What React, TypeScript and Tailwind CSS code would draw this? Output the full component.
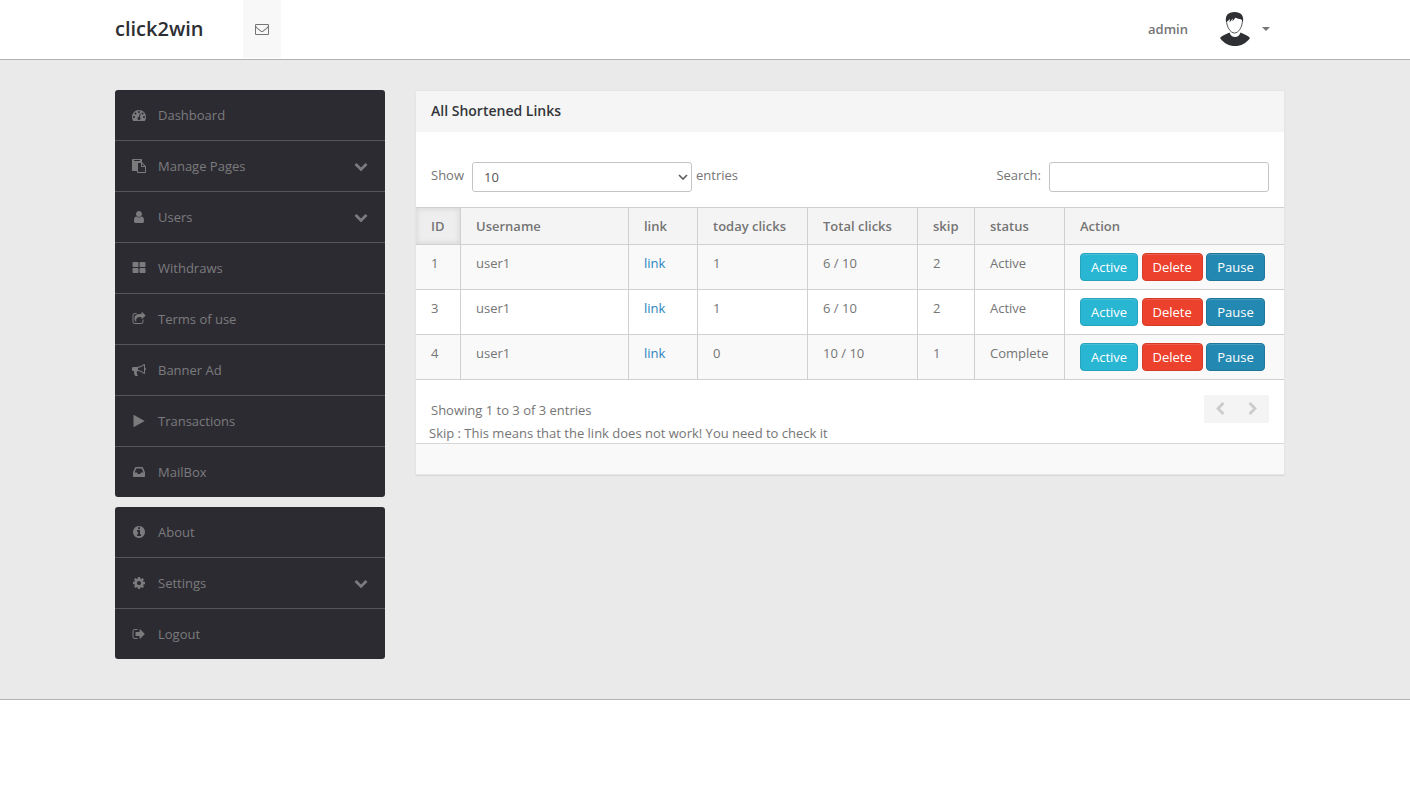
import { useState } from "react";

// 1792-unit icon outlines
const icons = {
  envelope:
    "M1664 1504v-768q-32 36-69 66-268 206-426 338-51 43-83 67t-86.5 48.5-102.5 24.5h-2q-48 0-102.5-24.5t-86.5-48.5-83-67q-158-132-426-338-37-30-69-66v768q0 13 9.5 22.5t22.5 9.5h1472q13 0 22.5-9.5t9.5-22.5zm0-1051v-24.5l-.5-13-3-12.5-5.5-9-9-7.5-14-2.5h-1472q-13 0-22.5 9.5t-9.5 22.5q0 168 147 284 193 152 401 317 6 5 35 29.5t46 37.5 44.5 31.5 50.5 27.5 43 9h2q20 0 43-9t50.5-27.5 44.5-31.5 46-37.5 35-29.5q208-165 401-317 54-43 100.5-115.5t46.5-131.5zm128-37v1088q0 66-47 113t-113 47h-1472q-66 0-113-47t-47-113v-1088q0-66 47-113t113-47h1472q66 0 113 47t47 113z",
  dashboard:
    "M384 1152q0-53-37.5-90.5t-90.5-37.5-90.5 37.5-37.5 90.5 37.5 90.5 90.5 37.5 90.5-37.5 37.5-90.5zm192-448q0-53-37.5-90.5t-90.5-37.5-90.5 37.5-37.5 90.5 37.5 90.5 90.5 37.5 90.5-37.5 37.5-90.5zm428 481l101-382q6-26-7.5-48.5t-38.5-29.5-48 6.5-30 39.5l-101 382q-60 5-107 43.5t-63 98.5q-20 77 20 146t117 89 146-20 89-117q16-60-6-117t-72-91zm660-33q0-53-37.5-90.5t-90.5-37.5-90.5 37.5-37.5 90.5 37.5 90.5 90.5 37.5 90.5-37.5 37.5-90.5zm-640-640q0-53-37.5-90.5t-90.5-37.5-90.5 37.5-37.5 90.5 37.5 90.5 90.5 37.5 90.5-37.5 37.5-90.5zm448 192q0-53-37.5-90.5t-90.5-37.5-90.5 37.5-37.5 90.5 37.5 90.5 90.5 37.5 90.5-37.5 37.5-90.5zm320 448q0 261-141 483-19 29-54 29h-1402q-35 0-54-29-141-221-141-483 0-182 71-348t191-286 286-191 348-71 348 71 286 191 191 286 71 348z",
  paste:
    "M768 1664h896v-640h-416q-40 0-68-28t-28-68v-416h-384v1152zm256-1440v-64q0-13-9.5-22.5t-22.5-9.5h-704q-13 0-22.5 9.5t-9.5 22.5v64q0 13 9.5 22.5t22.5 9.5h704q13 0 22.5-9.5t9.5-22.5zm256 672h299l-299-299v299zm512 128v672q0 40-28 68t-68 28h-960q-40 0-68-28t-28-68v-160h-544q-40 0-68-28t-28-68v-1344q0-40 28-68t68-28h1088q40 0 68 28t28 68v328q21 13 36 28l408 408q28 28 48 76t20 88z",
  user: "M1536 1399q0 109-62.5 187t-150.5 78h-854q-88 0-150.5-78t-62.5-187q0-85 8.5-160.5t31.5-152 58.5-131 94-89 134.5-34.5q131 128 313 128t313-128q76 0 134.5 34.5t94 89 58.5 131 31.5 152 8.5 160.5zm-256-887q0 159-112.5 271.5t-271.5 112.5-271.5-112.5-112.5-271.5 112.5-271.5 271.5-112.5 271.5 112.5 112.5 271.5z",
  thLarge:
    "M832 1024v384q0 52-38 90t-90 38h-512q-52 0-90-38t-38-90v-384q0-52 38-90t90-38h512q52 0 90 38t38 90zm0-768v384q0 52-38 90t-90 38h-512q-52 0-90-38t-38-90v-384q0-52 38-90t90-38h512q52 0 90 38t38 90zm896 768v384q0 52-38 90t-90 38h-512q-52 0-90-38t-38-90v-384q0-52 38-90t90-38h512q52 0 90 38t38 90zm0-768v384q0 52-38 90t-90 38h-512q-52 0-90-38t-38-90v-384q0-52 38-90t90-38h512q52 0 90 38t38 90z",
  share:
    "M1472 989v259q0 119-84.5 203.5t-203.5 84.5h-832q-119 0-203.5-84.5t-84.5-203.5v-832q0-119 84.5-203.5t203.5-84.5h255q13 0 22.5 9.5t9.5 22.5q0 27-26 32-77 26-133 60-10 4-16 4h-112q-66 0-113 47t-47 113v832q0 66 47 113t113 47h832q66 0 113-47t47-113v-214q0-19 18-29 28-13 54-37 16-16 35-8 21 9 21 29zm237-496l-384 384q-18 19-45 19-12 0-25-5-39-17-39-59v-192h-160q-323 0-438 131-119 137-74 473 3 23-20 34-8 2-12 2-16 0-26-13-10-14-21-31t-39.5-68.5-49.5-99.5-38.5-114-17.5-122q0-49 3.5-91t14-90 28-88 47-81.5 68.5-74 94.5-61.5 124.5-48.5 159.5-30.5 196.5-11h160v-192q0-42 39-59 13-5 25-5 26 0 45 19l384 384q19 19 19 45t-19 45z",
  bullhorn:
    "M1664 640q53 0 90.5 37.5t37.5 90.5-37.5 90.5-90.5 37.5v384q0 52-38 90t-90 38q-417-347-812-380-58 19-91 66t-31 100.5 40 92.5q-20 33-23 65.5t6 58 33.5 55 48 50 61.5 50.5q-29 58-111.5 83t-168.5 11.5-132-55.5q-7-23-29.5-87.5t-32-94.5-23-89-15-101 3.5-98.5 22-110.5h-122q-66 0-113-47t-47-113v-192q0-66 47-113t113-47h480q435 0 896-384 52 0 90 38t38 90v384zm-128 604v-954q-394 302-768 343v270q377 42 768 341z",
  play: "M1576 927l-1328 738q-23 13-39.5 3t-16.5-36v-1472q0-26 16.5-36t39.5 3l1328 738q23 13 23 31t-23 31z",
  inbox:
    "M1151 960h316q-1-3-2.5-8.5t-2.5-7.5l-212-496h-708l-212 496q-1 3-2.5 8.5t-2.5 7.5h316l95 192h320zm513 30v482q0 26-19 45t-45 19h-1408q-26 0-45-19t-19-45v-482q0-62 25-123l238-552q10-25 36.5-42t52.5-17h832q26 0 52.5 17t36.5 42l238 552q25 61 25 123z",
  info: "M1152 1376v-160q0-14-9-23t-23-9h-96v-512q0-14-9-23t-23-9h-320q-14 0-23 9t-9 23v160q0 14 9 23t23 9h96v320h-96q-14 0-23 9t-9 23v160q0 14 9 23t23 9h448q14 0 23-9t9-23zm-128-896v-160q0-14-9-23t-23-9h-192q-14 0-23 9t-9 23v160q0 14 9 23t23 9h192q14 0 23-9t9-23zm640 416q0 209-103 385.5t-279.5 279.5-385.5 103-385.5-103-279.5-279.5-103-385.5 103-385.5 279.5-279.5 385.5-103 385.5 103 279.5 279.5 103 385.5z",
  cog: "M1152 896q0-106-75-181t-181-75-181 75-75 181 75 181 181 75 181-75 75-181zm512-109v222q0 12-8 23t-20 13l-185 28q-19 54-39 91 35 50 107 138 10 12 10 25t-9 23q-27 37-99 108t-94 71q-12 0-26-9l-138-108q-44 23-91 38-16 136-29 186-7 28-36 28h-222q-14 0-24.5-8.5t-11.5-21.5l-28-184q-49-16-90-37l-141 107q-10 9-25 9-14 0-25-11-126-114-165-168-7-10-7-23 0-12 8-23 15-21 51-66.5t54-70.5q-27-50-41-99l-183-27q-13-2-21-12.5t-8-23.5v-222q0-12 8-23t19-13l186-28q14-46 39-92-40-57-107-138-10-12-10-24 0-10 9-23 26-36 98.5-107.5t94.5-71.5q13 0 26 10l138 107q44-23 91-38 16-136 29-186 7-28 36-28h222q14 0 24.5 8.5t11.5 21.5l28 184q49 16 90 37l142-107q9-9 24-9 13 0 25 10 129 119 165 170 7 8 7 22 0 12-8 23-15 21-51 66.5t-54 70.5q26 50 41 98l183 28q13 2 21 12.5t8 23.5z",
  signOut:
    "M704 1440q0 4 1 20t.5 26.5-3 23.5-10 19.5-20.5 6.5h-320q-119 0-203.5-84.5t-84.5-203.5v-704q0-119 84.5-203.5t203.5-84.5h320q13 0 22.5 9.5t9.5 22.5q0 4 1 20t.5 26.5-3 23.5-10 19.5-20.5 6.5h-320q-66 0-113 47t-47 113v704q0 66 47 113t113 47h312l11.5 1 11.5 3 8 5.5 7 9 2 13.5zm928-544q0 26-19 45l-544 544q-19 19-45 19t-45-19-19-45v-288h-448q-26 0-45-19t-19-45v-384q0-26 19-45t45-19h448v-288q0-26 19-45t45-19 45 19l544 544q19 19 19 45z",
  chevronDown:
    "M1683 808l-742 741q-19 19-45 19t-45-19l-742-741q-19-19-19-45.5t19-45.5l166-165q19-19 45-19t45 19l531 531 531-531q19-19 45-19t45 19l166 165q19 19 19 45.5t-19 45.5z",
  chevronLeft:
    "M1427 301l-531 531 531 531q19 19 19 45t-19 45l-166 166q-19 19-45 19t-45-19l-742-742q-19-19-19-45t19-45l742-742q19-19 45-19t45 19l166 166q19 19 19 45t-19 45z",
  chevronRight:
    "M1363 877l-742 742q-19 19-45 19t-45-19l-166-166q-19-19-19-45t19-45l531-531-531-531q-19-19-19-45t19-45l166-166q19-19 45-19t45 19l742 742q19 19 19 45t-19 45z",
};

type IconName = keyof typeof icons;

function Icon({ name, className = "size-[14px]" }: { name: IconName; className?: string }) {
  return (
    <svg viewBox="0 0 1792 1792" fill="currentColor" aria-hidden="true" className={className}>
      <path d={icons[name]} />
    </svg>
  );
}

type MenuItem = { label: string; icon: IconName; submenu?: boolean };

const mainMenu: MenuItem[] = [
  { label: "Dashboard", icon: "dashboard" },
  { label: "Manage Pages", icon: "paste", submenu: true },
  { label: "Users", icon: "user", submenu: true },
  { label: "Withdraws", icon: "thLarge" },
  { label: "Terms of use", icon: "share" },
  { label: "Banner Ad", icon: "bullhorn" },
  { label: "Transactions", icon: "play" },
  { label: "MailBox", icon: "inbox" },
];

const accountMenu: MenuItem[] = [
  { label: "About", icon: "info" },
  { label: "Settings", icon: "cog", submenu: true },
  { label: "Logout", icon: "signOut" },
];

const rows = [
  { id: 1, username: "user1", today: 1, total: "6 / 10", skip: 2, status: "Active" },
  { id: 3, username: "user1", today: 1, total: "6 / 10", skip: 2, status: "Active" },
  { id: 4, username: "user1", today: 0, total: "10 / 10", skip: 1, status: "Complete" },
];

function Menu({ items }: { items: MenuItem[] }) {
  return (
    <ul className="overflow-hidden rounded-[3px] bg-[#2d2b32] divide-y divide-[#57555b]">
      {items.map((item) => (
        <li key={item.label}>
          <a href="#" className="flex h-[50px] items-center px-[17px] text-[#7b7b7d] hover:text-white">
            <Icon name={item.icon} />
            <span className="ml-3 flex-1">{item.label}</span>
            {item.submenu && <Icon name="chevronDown" />}
          </a>
        </li>
      ))}
    </ul>
  );
}

function Avatar() {
  return (
    <svg viewBox="0 0 30 34" aria-hidden="true" className="h-[34px] w-[30px]">
      <path
        d="M0 26C2 23.500 6 22.500 9.500 20.500C10.500 23.500 12.500 25 15 25C17.500 25 19.500 23.500 20.500 20.500C24 22.500 28 23.500 30 26C26 31.500 21 34 15 34C9 34 4 31.500 0 26Z"
        fill="#2f3033"
      />
      <path
        d="M6.500 8C6.500 15 10.500 21 14.500 21C18.500 21 22.500 15 22.500 8C21 4 8 4 6.500 8Z"
        fill="#fff"
        stroke="#2f3033"
        strokeWidth="0.8"
      />
      <path
        d="M6 10C5 3.500 8 0 14.500 0C21 0 24 3.500 23 10L21.500 7.500C19.500 7 17 6.500 15.500 5.500L12.500 9.500L12.800 6.500L9.500 10.500L10 7L7.200 9.500Z"
        fill="#2f3033"
      />
    </svg>
  );
}

const th = "border-r border-b border-[#d0d0d0] px-[15px] py-2 text-left font-semibold last:border-r-0";
const td = "border-r border-b border-[#d0d0d0] px-[15px] py-2 align-top last:border-r-0";
const btn =
  "rounded-[4px] border px-[10px] py-[3px] leading-5 text-white align-top shadow-[inset_0_1px_0_rgba(255,255,255,0.15)]";

export default function App() {
  const [search, setSearch] = useState("");
  const [pageSize, setPageSize] = useState("10");
  const visible = rows.filter((row) =>
    Object.values(row).join(" ").toLowerCase().includes(search.toLowerCase())
  );

  return (
    <div className="bg-white font-['Open_Sans',sans-serif] text-[13px] leading-5 text-[#757575]">
      <header className="border-b border-[#b4b4b4] bg-white">
        <div className="mx-auto flex h-[59px] max-w-[1180px] items-center pr-[25px] pb-px">
          <a href="#" className="text-[20px] font-semibold text-[#2c2e33]">
            click2win
          </a>
          <button
            type="button"
            aria-label="Messages"
            className="ml-[39px] flex w-[38px] items-center justify-center self-stretch bg-[#f8f8f8]"
          >
            <Icon name="envelope" />
          </button>
          <button type="button" className="ml-auto flex items-center font-semibold">
            <span className="mr-8">admin</span>
            <Avatar />
            <svg viewBox="0 0 8 4" fill="currentColor" aria-hidden="true" className="ml-3 h-1 w-2">
              <path d="M0 0h8L4 4z" />
            </svg>
          </button>
        </div>
      </header>

      <div className="border-b border-[#b4b4b4] bg-[#eaeaea] pt-[30px] pb-10 shadow-[0_1px_2px_rgba(0,0,0,0.12)]">
        <div className="mx-auto flex max-w-[1180px] items-start gap-[30px] pr-[10px]">
          <nav className="flex w-[270px] shrink-0 flex-col gap-[10px]">
            <Menu items={mainMenu} />
            <Menu items={accountMenu} />
          </nav>

          <main className="min-w-0 flex-1 rounded-[2px] border border-[#e6e6e6] bg-white shadow-[0_1px_1px_rgba(0,0,0,0.08)]">
            <h1 className="bg-[#f5f5f5] px-[15px] pt-[10px] pb-[11px] text-[14px] font-semibold text-[#33353a]">
              All Shortened Links
            </h1>

            <div className="flex justify-between px-[15px] pt-[30px] pb-[15px]">
              <div className="flex">
                <label htmlFor="page-size" className="mr-2 pt-[3px]">
                  Show
                </label>
                <div className="relative mr-1">
                  <select
                    id="page-size"
                    value={pageSize}
                    onChange={(e) => setPageSize(e.target.value)}
                    className="h-[30px] w-[220px] appearance-none rounded-[3px] border border-[#c4c4c4] bg-white px-[11px] text-[#555]"
                  >
                    <option>10</option>
                    <option>25</option>
                    <option>50</option>
                    <option>100</option>
                  </select>
                  <svg
                    viewBox="0 0 10 6"
                    fill="none"
                    stroke="#5a5a5a"
                    strokeWidth="1.6"
                    aria-hidden="true"
                    className="pointer-events-none absolute top-3 right-1 h-[6px] w-[10px]"
                  >
                    <path d="M1 1l4 4 4-4" />
                  </svg>
                </div>
                <span className="pt-[3px]">entries</span>
              </div>
              <div className="flex">
                <label htmlFor="search" className="mr-2 pt-[3px]">
                  Search:
                </label>
                <input
                  id="search"
                  type="text"
                  value={search}
                  onChange={(e) => setSearch(e.target.value)}
                  className="h-[30px] w-[220px] rounded-[3px] border border-[#c4c4c4] bg-white px-[11px] text-[#555]"
                />
              </div>
            </div>

            <table className="w-full table-fixed border-separate border-spacing-0 border-t border-[#d0d0d0]">
              <colgroup>
                <col className="w-[45px]" />
                <col />
                <col className="w-[69px]" />
                <col className="w-[110px]" />
                <col className="w-[110px]" />
                <col className="w-[57px]" />
                <col className="w-[90px]" />
                <col className="w-[219px]" />
              </colgroup>
              <thead className="bg-[#f4f4f4]">
                <tr>
                  <th className={th + " bg-[#eeeeee] shadow-[inset_0_0_6px_rgba(0,0,0,0.12)]"}>ID</th>
                  <th className={th}>Username</th>
                  <th className={th}>link</th>
                  <th className={th}>today clicks</th>
                  <th className={th}>Total clicks</th>
                  <th className={th}>skip</th>
                  <th className={th}>status</th>
                  <th className={th}>Action</th>
                </tr>
              </thead>
              <tbody>
                {visible.map((row) => (
                  <tr key={row.id} className="odd:bg-[#f9f9f9]">
                    <td className={td}>{row.id}</td>
                    <td className={td}>{row.username}</td>
                    <td className={td}>
                      <a href="#" className="text-[#2a85c0] hover:underline">
                        link
                      </a>
                    </td>
                    <td className={td}>{row.today}</td>
                    <td className={td}>{row.total}</td>
                    <td className={td}>{row.skip}</td>
                    <td className={td}>{row.status}</td>
                    <td className={td}>
                      <button type="button" className={btn + " border-[#26a3bd] bg-[#29b6d3]"}>
                        Active
                      </button>{" "}
                      <button type="button" className={btn + " border-[#d43b27] bg-[#ec412c]"}>
                        Delete
                      </button>{" "}
                      <button type="button" className={btn + " border-[#1f7699] bg-[#2489b2]"}>
                        Pause
                      </button>
                    </td>
                  </tr>
                ))}
              </tbody>
            </table>

            <div className="flex justify-between px-[15px] pt-[15px]">
              <p className="pt-[5px]">Showing 1 to 3 of 3 entries</p>
              <div className="flex h-7 w-[65px] rounded-[2px] bg-[#f4f4f4] text-[#cccccc]">
                <button type="button" aria-label="Previous page" className="flex flex-1 items-center justify-center">
                  <Icon name="chevronLeft" />
                </button>
                <button type="button" aria-label="Next page" className="flex flex-1 items-center justify-center">
                  <Icon name="chevronRight" />
                </button>
              </div>
            </div>
            <p className="px-[13px]">Skip : This means that the link does not work! You need to check it</p>
            <div className="h-[31px] border-t border-[#d8d8d8] bg-[#f9f9f9]" />
          </main>
        </div>
      </div>
    </div>
  );
}
